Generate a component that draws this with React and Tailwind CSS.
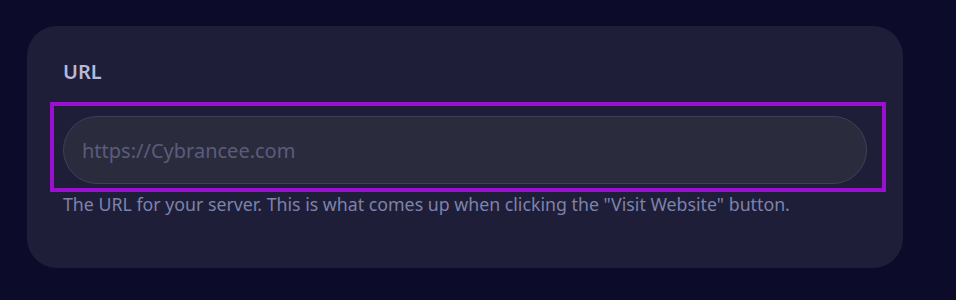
export default function App() {
  return (
    <div className="min-h-[300px] w-full bg-[#0c0c2a] pt-[26px] pl-[27px] font-['Noto_Sans','Open_Sans',sans-serif]">
      <div className="w-[876px] h-[242px] rounded-[30px] bg-[#1e1e38] px-9 pt-[32px]">
        <label className="block text-[20px] font-semibold leading-[28px] text-[#b6b9d9]">URL</label>
        <div className="mt-4 -ml-[13px] -mr-[19px] border-4 border-[#9a0fd0] pl-[9px] pr-[15px] pt-[10px] pb-[4px]">
          <input
            type="text"
            placeholder="https://Cybrancee.com"
            className="block w-full h-[68px] rounded-full border border-[#3f3f58] bg-[#2b2b3e] px-[18px] text-[20px] text-[#c8c9e0] placeholder:text-[#5b5c7b] outline-none"
          />
        </div>
        <p className="mt-[3px] text-[17.75px] leading-[18px] text-[#7e82ab]">
          The URL for your server. This is what comes up when clicking the "Visit Website" button.
        </p>
      </div>
    </div>
  );
}
